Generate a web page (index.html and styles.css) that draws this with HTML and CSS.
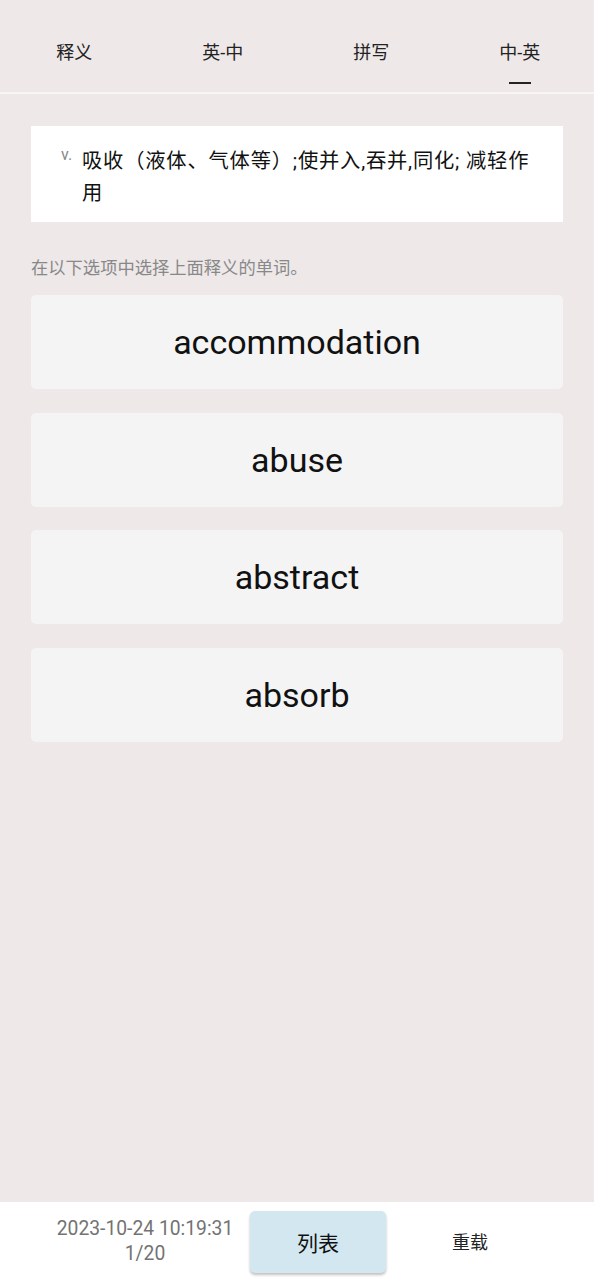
FILE: index.html
```html
<!DOCTYPE html>
<html lang="zh">
<head>
<meta charset="utf-8">
<link rel="stylesheet" href="styles.css">
</head>
<body>
<div class="app">
  <nav class="tabs">
    <div class="tab">释义</div>
    <div class="tab">英-中</div>
    <div class="tab">拼写</div>
    <div class="tab active">中-英</div>
  </nav>
  <main class="content">
    <section class="definition">
      <span class="pos">v.</span>
      <p class="meaning">吸收（液体、气体等）;使并入,吞并,同化; 减轻作用</p>
    </section>
    <p class="hint">在以下选项中选择上面释义的单词。</p>
    <div class="options">
      <div class="option">accommodation</div>
      <div class="option">abuse</div>
      <div class="option">abstract</div>
      <div class="option">absorb</div>
    </div>
  </main>
  <footer class="bottom">
    <div class="status">2023-10-24 10:19:31<br>1/20</div>
    <button class="list-btn">列表</button>
    <div class="reload">重载</div>
  </footer>
</div>
</body>
</html>
```

FILE: styles.css
```css
* { box-sizing: border-box; }
html, body { margin: 0; padding: 0; }
body {
  background: #eee8e8;
  font-family: Roboto, "Noto Sans CJK SC", sans-serif;
  color: #111;
}
.app {
  width: 594px;
  height: 1280px;
  display: flex;
  flex-direction: column;
}
.tabs {
  display: flex;
  height: 94px;
  border-bottom: 2px solid #f8f5f5;
}
.tab {
  flex: 1;
  display: flex;
  flex-direction: column;
  align-items: center;
  padding-top: 40px;
  font-size: 18px;
  line-height: 26px;
  color: #222;
}
.tab.active::after {
  content: "";
  display: block;
  width: 22px;
  height: 2px;
  background: #222;
  margin-top: 16px;
}
.content {
  flex: 1;
  padding: 32px 31px 0 31px;
}
.definition {
  background: #fff;
  display: flex;
  padding: 19px 22px 12px 30px;
  min-height: 96px;
}
.pos {
  font-size: 16px;
  color: #888;
  width: 21px;
  line-height: 20px;
  flex: none;
}
.meaning {
  margin: 0;
  font-size: 20.3px;
  letter-spacing: 0.8px;
  line-height: 32px;
  color: #111;
}
.hint {
  margin: 34px 0 15px;
  font-size: 17.3px;
  line-height: 24px;
  color: #888;
}
.options {
  display: flex;
  flex-direction: column;
  gap: 23.67px;
}
.option {
  height: 94px;
  background: #f4f4f4;
  border-radius: 5px;
  display: flex;
  align-items: center;
  justify-content: center;
  font-size: 34px;
  color: #111;
}
.bottom {
  height: 78px;
  background: #fff;
  display: grid;
  grid-template-columns: 210px 136px 1fr;
  align-items: center;
  padding: 0 40px 0 40px;
}
.status {
  text-align: center;
  font-size: 19.3px;
  line-height: 25px;
  color: #737373;
}
.list-btn {
  height: 62px;
  border: none;
  border-radius: 5px;
  background: #d2e7ef;
  box-shadow: 0 2px 3px rgba(0,0,0,0.25);
  font-family: inherit;
  font-size: 21px;
  color: #111;
  margin-top: 1px;
}
.reload {
  text-align: center;
  font-size: 18px;
  color: #222;
}
```
